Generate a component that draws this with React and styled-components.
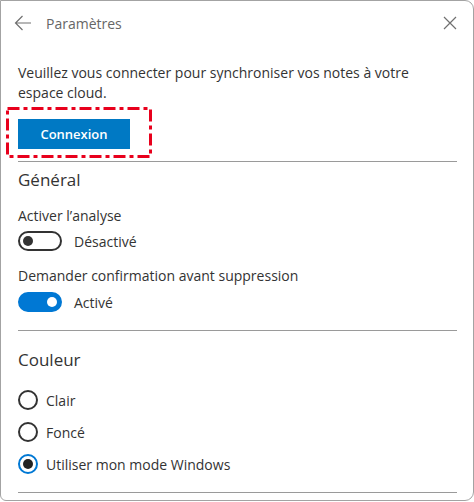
import React from 'react';
import styled, { createGlobalStyle } from 'styled-components';

const GlobalStyle = createGlobalStyle`
  html, body {
    margin: 0;
    padding: 0;
    background: #ffffff;
  }
  body {
    font-family: "Open Sans", "Noto Sans", sans-serif;
  }
`;

const Panel = styled.div`
  box-sizing: border-box;
  width: 474px;
  height: 501px;
  border: 1px solid #a3a3a3;
  border-radius: 0 9px 9px 6px;
  background: #ffffff;
  overflow: hidden;
`;

const Header = styled.div`
  display: flex;
  align-items: center;
  height: 44px;
  padding: 0 13px 0 12px;
`;

const IconButton = styled.button`
  display: flex;
  align-items: center;
  justify-content: center;
  background: none;
  border: none;
  padding: 0;
  width: 20px;
  height: 20px;
  color: #707070;
  cursor: pointer;
`;

const Title = styled.div`
  flex: 1;
  margin-left: 13px;
  font-size: 14px;
  color: #666666;
`;

const Content = styled.div`
  padding: 0 16px 0 17px;
`;

const Paragraph = styled.p`
  margin: 18px 0 0;
  font-size: 14px;
  line-height: 20px;
  color: #333333;
`;

const ButtonFrame = styled.div`
  position: relative;
  margin-top: 16px;
  width: 112px;
`;

const Highlight = styled.svg`
  position: absolute;
  left: -12px;
  top: -12px;
  pointer-events: none;
`;

const PrimaryButton = styled.button`
  display: block;
  width: 112px;
  height: 30px;
  border: none;
  background: #0079c4;
  color: #ffffff;
  font-family: "Open Sans", "Noto Sans", sans-serif;
  font-weight: 600;
  font-size: 13px;
  padding: 0;
`;

const Divider = styled.hr`
  border: none;
  border-top: 1px solid #9a9a9a;
  margin: ${p => p.$top}px 0 0;
  height: 0;
`;

const SectionTitle = styled.h2`
  margin: ${p => p.$top}px 0 0;
  font-size: 17px;
  line-height: 26px;
  font-weight: 400;
  color: #333333;
`;

const Label = styled.div`
  margin-top: ${p => p.$top}px;
  font-size: 14px;
  line-height: 20px;
  color: #333333;
`;

const ToggleRow = styled.div`
  display: flex;
  align-items: center;
  margin-top: ${p => p.$top}px;
  gap: 12px;
`;

const Track = styled.div`
  position: relative;
  box-sizing: border-box;
  width: 44px;
  height: 20px;
  border-radius: 10px;
  border: 2px solid ${p => (p.$on ? '#0078d4' : '#333333')};
  background: ${p => (p.$on ? '#0078d4' : '#ffffff')};
`;

const Knob = styled.div`
  position: absolute;
  top: 3px;
  left: ${p => (p.$on ? '27px' : '3px')};
  width: 10px;
  height: 10px;
  border-radius: 50%;
  background: ${p => (p.$on ? '#ffffff' : '#333333')};
`;

const StateText = styled.span`
  font-size: 14px;
  color: #333333;
`;

const RadioRow = styled.label`
  display: flex;
  align-items: center;
  gap: 8px;
  margin-top: ${p => p.$top}px;
  font-size: 14px;
  color: #333333;
`;

const RadioCircle = styled.span`
  box-sizing: border-box;
  width: 20px;
  height: 20px;
  border-radius: 50%;
  border: 2px solid ${p => (p.$checked ? '#0078d4' : '#333333')};
  display: flex;
  align-items: center;
  justify-content: center;

  &::after {
    content: '';
    display: ${p => (p.$checked ? 'block' : 'none')};
    width: 10px;
    height: 10px;
    border-radius: 50%;
    background: #222222;
  }
`;

const Toggle = ({ on, label, top }) => (
  <ToggleRow $top={top}>
    <Track $on={on}>
      <Knob $on={on} />
    </Track>
    <StateText>{label}</StateText>
  </ToggleRow>
);

const Radio = ({ checked, label, top }) => (
  <RadioRow $top={top}>
    <RadioCircle $checked={checked} />
    {label}
  </RadioRow>
);

export default function App() {
  return (
    <>
      <GlobalStyle />
      <Panel>
        <Header>
          <IconButton aria-label="Retour">
            <svg width="18" height="16" viewBox="0 0 18 16" fill="none" stroke="currentColor" strokeWidth="1.2">
              <path d="M17 8H1.5M8.5 1L1.5 8l7 7" />
            </svg>
          </IconButton>
          <Title>Paramètres</Title>
          <IconButton aria-label="Fermer">
            <svg width="14" height="14" viewBox="0 0 14 14" fill="none" stroke="currentColor" strokeWidth="1.2">
              <path d="M1 1l12 12M13 1L1 13" />
            </svg>
          </IconButton>
        </Header>
        <Content>
          <Paragraph>
            Veuillez vous connecter pour synchroniser vos notes à votre espace cloud.
          </Paragraph>
          <ButtonFrame>
            <Highlight width="146" height="51" viewBox="0 0 146 51">
              <rect
                x="1.5"
                y="1.5"
                width="143"
                height="48"
                fill="none"
                stroke="#e8001c"
                strokeWidth="3"
                strokeDasharray="12 4 4 4"
              />
            </Highlight>
            <PrimaryButton>Connexion</PrimaryButton>
          </ButtonFrame>
          <Divider $top={12} />
          <SectionTitle $top={5}>Général</SectionTitle>
          <Label $top={13}>Activer l’analyse</Label>
          <Toggle top={5} on={false} label="Désactivé" />
          <Label $top={15}>Demander confirmation avant suppression</Label>
          <Toggle top={6} on label="Activé" />
          <Divider $top={18} />
          <SectionTitle $top={16}>Couleur</SectionTitle>
          <Radio top={17} label="Clair" />
          <Radio top={12} label="Foncé" />
          <Radio top={12} checked label="Utiliser mon mode Windows" />
          <Divider $top={18} />
        </Content>
      </Panel>
    </>
  );
}
